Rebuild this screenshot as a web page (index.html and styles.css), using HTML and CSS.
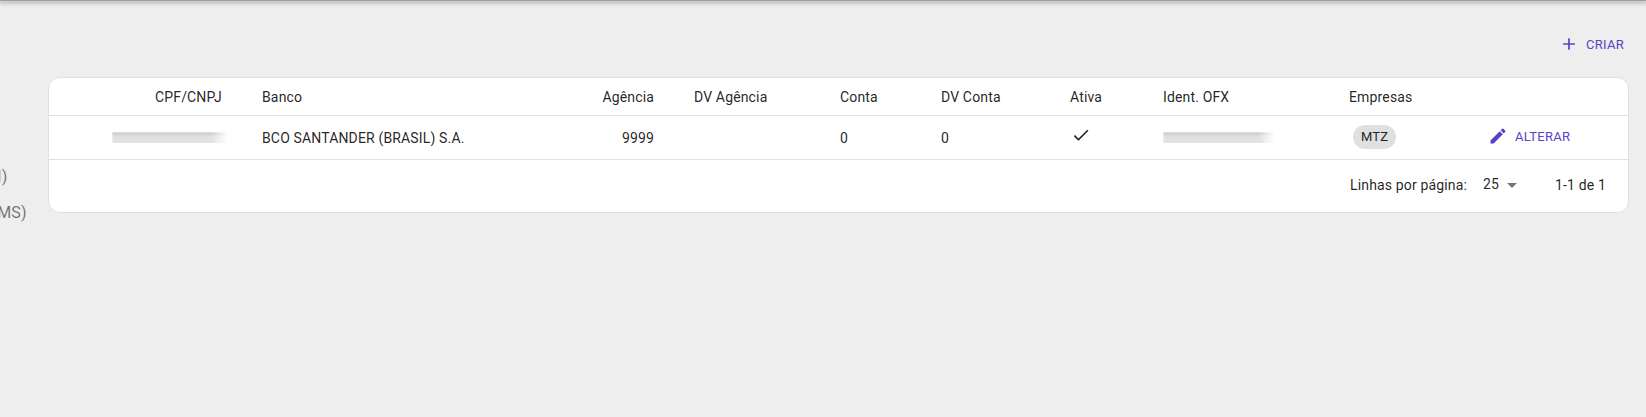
FILE: index.html
```html
<!DOCTYPE html>
<html lang="en">
<head>
    <meta charset="UTF-8">
    <meta name="viewport" content="width=device-width, initial-scale=1.0">
    <title>Contas bancárias</title>
    <link rel="stylesheet" href="styles.css">
</head>
<body>

    <div class="appbar"></div>

    <div class="layout">
        <!-- Sidebar, cut off by the window edge -->
        <div class="sidebar">
            <p class="menu-item menu-first">Contas (I)</p>
            <p class="menu-item">Contas (MS)</p>
        </div>

        <div class="content">
            <div class="toolbar">
                <a class="btn-create" href="#">
                    <svg class="icon-plus" viewBox="0 0 24 24"><path d="M19 13h-6v6h-2v-6H5v-2h6V5h2v6h6v2z"/></svg>
                    CRIAR
                </a>
            </div>

            <div class="card">
                <table class="grid">
                    <colgroup>
                        <col class="col-doc">
                        <col class="col-bank">
                        <col class="col-branch">
                        <col class="col-branch-dv">
                        <col class="col-account">
                        <col class="col-account-dv">
                        <col class="col-active">
                        <col class="col-ofx">
                        <col class="col-company">
                        <col class="col-action">
                    </colgroup>
                    <thead>
                        <tr>
                            <th class="num">CPF/CNPJ</th>
                            <th>Banco</th>
                            <th class="num">Agência</th>
                            <th>DV Agência</th>
                            <th>Conta</th>
                            <th>DV Conta</th>
                            <th>Ativa</th>
                            <th>Ident. OFX</th>
                            <th>Empresas</th>
                            <th></th>
                        </tr>
                    </thead>
                    <tbody>
                        <tr>
                            <td class="num"><div class="redacted redacted-doc"></div></td>
                            <td>BCO SANTANDER (BRASIL) S.A.</td>
                            <td class="num">9999</td>
                            <td></td>
                            <td>0</td>
                            <td>0</td>
                            <td><svg class="icon-check" viewBox="0 0 24 24"><path d="M9 16.2 4.8 12l-1.4 1.4L9 19 21 7l-1.4-1.4L9 16.2z"/></svg></td>
                            <td><div class="redacted redacted-ofx"></div></td>
                            <td><span class="chip">MTZ</span></td>
                            <td>
                                <a class="btn-edit" href="#">
                                    <svg class="icon-edit" viewBox="0 0 24 24"><path d="M3 17.25V21h3.75L17.81 9.94l-3.75-3.75L3 17.25zM20.71 7.04c.39-.39.39-1.02 0-1.41l-2.34-2.34a.9959.9959 0 0 0-1.41 0l-1.83 1.83 3.75 3.75 1.83-1.83z"/></svg>
                                    ALTERAR
                                </a>
                            </td>
                        </tr>
                    </tbody>
                </table>

                <div class="pager">
                    <span>Linhas por página:</span>
                    <span class="page-size"><span class="page-size-value">25</span>
                        <svg class="icon-drop" viewBox="0 0 24 24"><path d="M7 10l5 5 5-5z"/></svg>
                    </span>
                    <span>1-1 de 1</span>
                </div>
            </div>
        </div>
    </div>

</body>
</html>
```

FILE: styles.css
```css
html, body {
    height: 100%;
}
body {
    font-family: Roboto, "Liberation Sans", sans-serif;
    font-size: 14px;
    letter-spacing: 0.01071em;
    color: rgba(0,0,0,0.87);
    background-color: #eeeeee;
    margin: 0;
    overflow: hidden;
}
.appbar {
    height: 1px;
    background-color: #a0a0a0;
    box-shadow: 0 1px 4px 1px rgba(0,0,0,0.3);
}
.layout {
    display: flex;
}
.sidebar {
    width: 48px;
    flex-shrink: 0;
    overflow: hidden;
    padding-top: 164px;
}
.menu-item {
    margin: 0 0 0 -64px;
    height: 36px;
    line-height: 24px;
    font-size: 16px;
    white-space: nowrap;
    color: rgba(0,0,0,0.54);
}
.content {
    flex: 1;
    padding-right: 17px;
}
.toolbar {
    display: flex;
    justify-content: flex-end;
    height: 76px;
    padding-top: 31px;
    box-sizing: border-box;
}
.btn-create {
    display: flex;
    align-items: center;
    gap: 7px;
    height: 24px;
    padding-right: 5px;
    font-size: 13px;
    letter-spacing: 0.02em;
    color: #5a3fc8;
    text-decoration: none;
}
.icon-plus {
    width: 20px;
    height: 20px;
    fill: #5a3fc8;
}
.card {
    background-color: #fff;
    border: 1px solid #e0e0e0;
    border-radius: 12px;
    overflow: hidden;
}
.grid {
    width: 100%;
    table-layout: fixed;
    border-collapse: collapse;
}
.col-doc { width: 197px; }
.col-bank { width: 340px; }
.col-branch { width: 92px; }
.col-branch-dv { width: 146px; }
.col-account { width: 101px; }
.col-account-dv { width: 129px; }
.col-active { width: 93px; }
.col-ofx { width: 186px; }
.col-company { width: 131px; }
.grid th {
    height: 37px;
    padding: 0 16px;
    font-weight: 400;
    text-align: left;
    border-bottom: 1px solid #e0e0e0;
}
.grid td {
    height: 43px;
    padding: 0 16px;
    border-bottom: 1px solid #e0e0e0;
}
.grid th.num, .grid td.num {
    text-align: right;
    padding-right: 24px;
}
.redacted {
    height: 11px;
    background: linear-gradient(#d4d4d4, #c4c4c4 15%, #e8e8e8 40%, #dcdcdc 60%, #ececec 80%, #c8c8c8);
    filter: blur(1px);
    -webkit-mask-image: linear-gradient(to right, #000 85%, transparent);
    mask-image: linear-gradient(to right, #000 85%, transparent);
}
.redacted-doc {
    width: 116px;
    margin-left: 47px;
}
.redacted-ofx {
    width: 112px;
    margin-top: -1px;
}
.icon-check {
    display: block;
    width: 20px;
    height: 20px;
    margin-top: -6px;
    margin-left: 1px;
    fill: rgba(0,0,0,0.87);
}
.chip {
    display: inline-block;
    height: 24px;
    line-height: 24px;
    padding: 0 8px;
    margin-left: 4px;
    margin-top: -1px;
    border-radius: 12px;
    background-color: #e0e0e0;
    font-size: 13px;
    vertical-align: middle;
}
.btn-edit {
    display: inline-flex;
    align-items: center;
    gap: 7px;
    margin-left: 8px;
    font-size: 13px;
    letter-spacing: 0.02em;
    color: #5a3fc8;
    text-decoration: none;
}
.icon-edit {
    width: 20px;
    height: 20px;
    fill: #5a3fc8;
}
.pager {
    display: flex;
    justify-content: flex-end;
    align-items: center;
    height: 50px;
    padding-right: 22px;
    padding-bottom: 2px;
}
.page-size {
    display: flex;
    align-items: center;
    margin-left: 16px;
    margin-right: 31px;
}
.page-size-value {
    margin-top: -2px;
}
.icon-drop {
    width: 24px;
    height: 24px;
    margin-left: 1px;
    fill: rgba(0,0,0,0.54);
}
```
